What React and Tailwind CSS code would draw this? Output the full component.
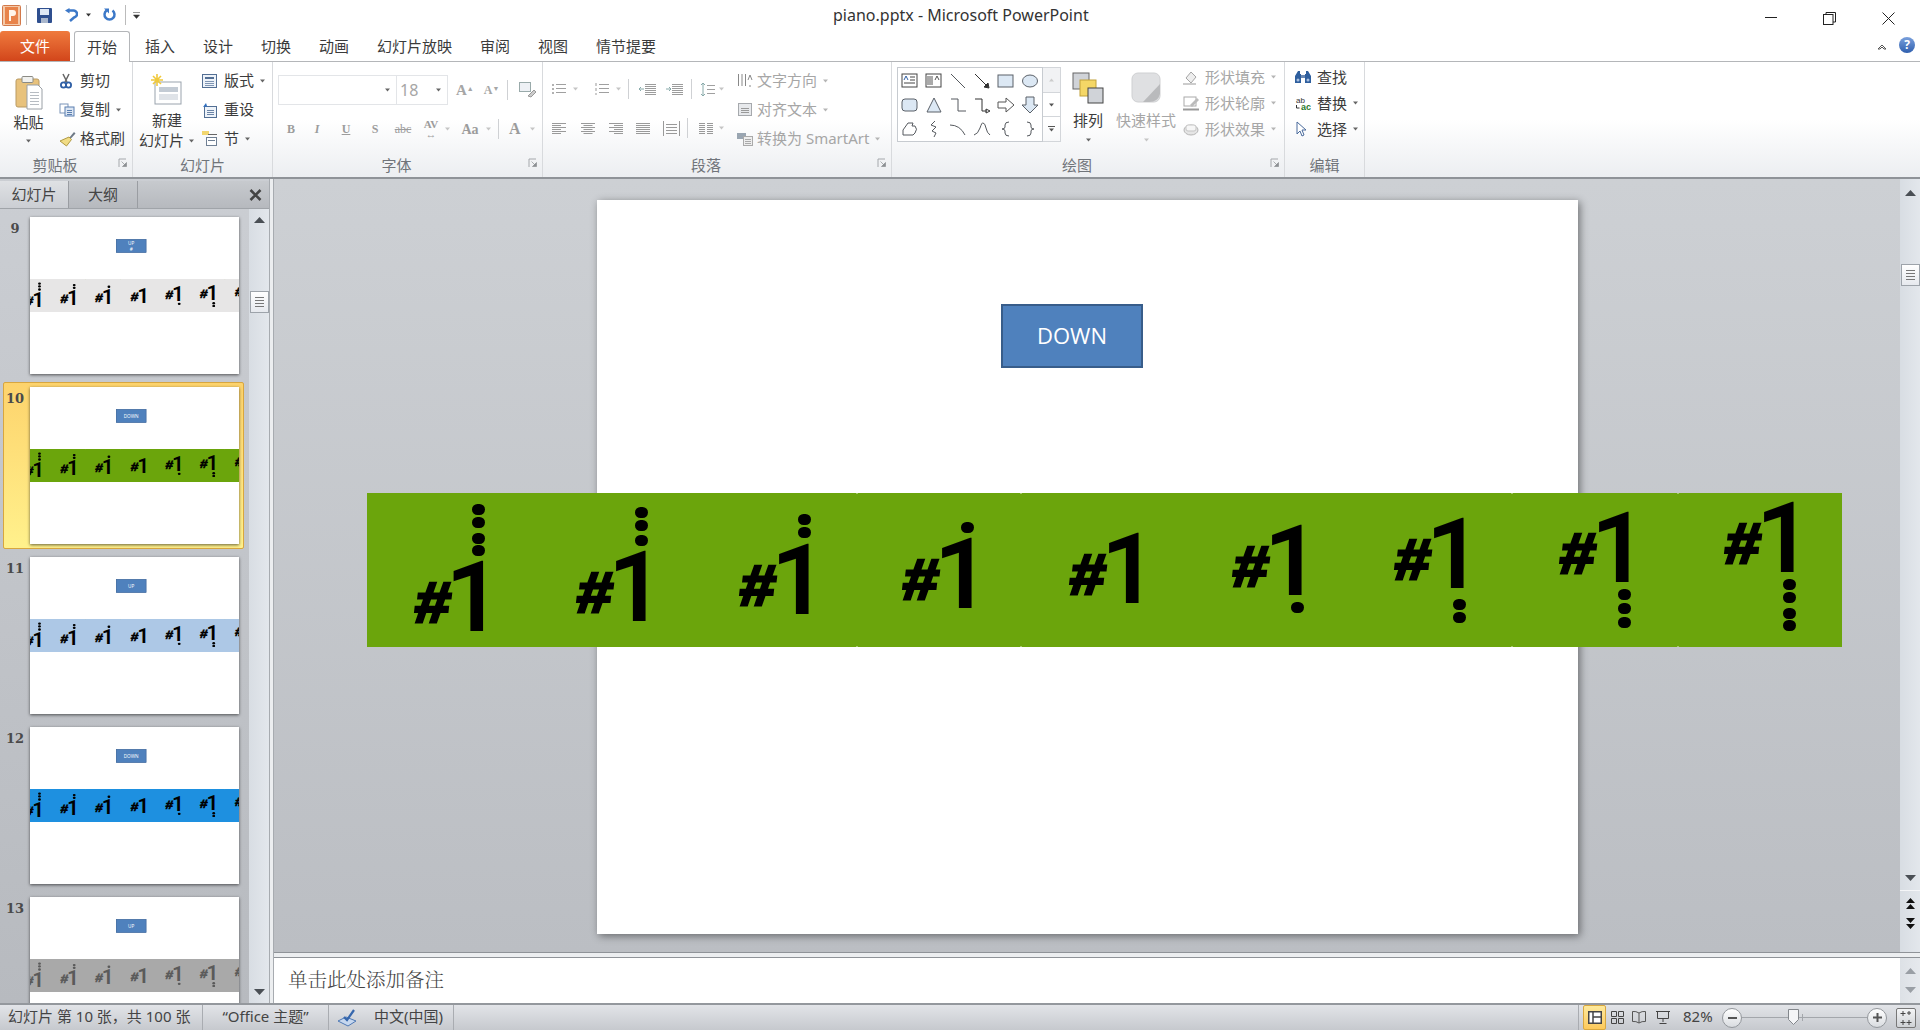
import React from "react";

const Svg = ({ w, h, children, className = "" }) => (
  <svg width={w} height={h} viewBox={`0 0 ${w} ${h}`} className={"shrink-0 " + className}>{children}</svg>
);
const Arrow = ({ c = "#666", className = "" }) => (
  <Svg w={7} h={4} className={className}><path d="M1 0.5h5L3.5 3.5z" fill={c} /></Svg>
);
const Launcher = () => (
  <Svg w={10} h={10}><path d="M1 9V1h7" fill="none" stroke="#a5a8ac" /><path d="M3.5 3.5l4 4M8.5 4.5v4h-4z" fill="#8d9094" stroke="#8d9094" strokeWidth=".7" /></Svg>
);

const NOTES = [
  { r: 485.5, y: 562, d: [509.3, 522.7, 538.3, 550.3] },
  { r: 648, y: 552, d: [512, 525, 540] },
  { r: 811, y: 545, d: [519, 532] },
  { r: 974, y: 539, d: [527] },
  { r: 1141, y: 534, d: [] },
  { r: 1304, y: 526, d: [607] },
  { r: 1466, y: 519, d: [604, 617] },
  { r: 1631, y: 513, d: [594, 608, 622] },
  { r: 1796, y: 503, d: [584, 597, 613, 625] },
];

function Band({ bg, ink }) {
  return (
    <div className={"absolute left-[-230px] top-[293px] w-[1475px] h-[154px] " + bg + " " + ink}>
      {[489, 653, 1144, 1310].map((x) => (
        <React.Fragment key={x}>
          <div className="absolute top-0 w-[2px] h-px bg-[#a6c96a]" style={{ left: x }} />
          <div className="absolute bottom-0 w-[2px] h-px bg-[#a6c96a]" style={{ left: x }} />
        </React.Fragment>
      ))}
      {NOTES.map((n, i) => (
        <React.Fragment key={i}>
          <div
            className="absolute w-[120px] h-[96px] text-right whitespace-nowrap leading-[96px] font-bold"
            style={{ left: n.r - 367 - 120 + 16, top: n.y - 493 - 12 }}
          >
            <span className="relative top-[-9px] mr-[-4px] inline-block origin-right scale-x-[1.1] -skew-x-6 text-[57px] italic [font-family:'Liberation_Sans',sans-serif] [-webkit-text-stroke:3px_currentColor]">#</span>
            <span className="text-[98px] font-semibold [font-family:'Roboto',sans-serif]">1</span>
          </div>
          {n.d.map((y) => (
            <div key={y} className="absolute w-[13px] h-[11px] rounded-full bg-current" style={{ left: n.r - 367 - 13.5, top: y - 493 - 5.5 }} />
          ))}
        </React.Fragment>
      ))}
    </div>
  );
}

function SlideContent({ label, bg, ink, sub }) {
  return (
    <>
      <div className="absolute left-[404px] top-[104px] w-[142px] h-[64px] bg-[#4f81bd] border-2 border-[#385d8a] text-white flex flex-col items-center justify-center text-[22px] leading-[28px] pb-[2px] [font-family:'Open_Sans',sans-serif]">
        <span>{label}</span>
        {sub && <span>{sub}</span>}
      </div>
      <Band bg={bg} ink={ink} />
    </>
  );
}

function Thumb({ n, label, sub, bg, ink = "text-black", selected }) {
  return (
    <div className="relative h-[170px] shrink-0 flex">
      {selected && (
        <div className="absolute left-[3px] top-[-5px] w-[241px] h-[167px] rounded-[2px] border border-[#d8a63f] bg-gradient-to-b from-[#fdd36c] to-[#fff18c]" />
      )}
      <div className="relative w-[30px] text-center pt-[4px] text-[13px] leading-[16px] font-bold text-[#4a4a4a] [font-family:'DejaVu_Serif',serif]">{n}</div>
      <div className="relative w-[209px] h-[157px] bg-white overflow-hidden shadow-[0_1px_3px_rgba(0,0,0,0.6)]">
        <div className="absolute left-0 top-0 w-[981px] h-[734px] origin-top-left scale-[0.213]">
          <SlideContent label={label} sub={sub} bg={bg} ink={ink} />
        </div>
      </div>
    </div>
  );
}

const TextRow = ({ icon, label, arrow, h = "h-[29px]", iw = "w-[21px]", off }) => (
  <div className={"flex items-center whitespace-nowrap " + h}>
    <div className={"flex items-center " + iw}>{icon}</div>
    <span className={off ? "text-[#a6a6a6]" : "text-[#3c3c3c]"}>{label}</span>
    {arrow && <Arrow c={off ? "#b5b5b5" : "#666"} className="ml-[5px]" />}
  </div>
);

const Group = ({ w, label, launcher, children }) => (
  <div className={"relative h-full flex flex-col shrink-0 border-r border-[#d8dadd] " + w}>
    <div className="flex-1 flex min-h-0">{children}</div>
    <div className={"relative h-[25px] shrink-0 flex items-center justify-center pt-[2px] text-[15px] text-[#70747a] " + (launcher ? "pr-[22px]" : "")}>
      {label}
      {launcher && <div className="absolute right-[4px] top-[6px]"><Launcher /></div>}
    </div>
  </div>
);

const lines = (x, ys, len, c = "#8c8c8c") => ys.map((y) => <path key={y} d={`M${x} ${y}.5h${len}`} stroke={c} fill="none" />);

const Clip = () => (
  <Svg w={28} h={35}>
    <rect x="1" y="4" width="23" height="28" rx="2" fill="#e8c27c" stroke="#b99a63" />
    <rect x="7" y="1.5" width="11" height="6" rx="1" fill="#f1f1ee" stroke="#8b8b85" />
    <path d="M12 10h11l4 4v20H12z" fill="#fff" stroke="#9aa0a6" />
    {lines(15, [17, 20, 23, 26, 29], 9, "#b7bcc2")}
  </Svg>
);
const Scissors = () => (
  <Svg w={14} h={16}><path d="M4 1l4 8M10 1L6 9" stroke="#666" strokeWidth="1.5" /><circle cx="4.5" cy="12" r="2.6" fill="none" stroke="#2f5fa5" strokeWidth="1.8" /><circle cx="9.5" cy="12" r="2.6" fill="none" stroke="#2f5fa5" strokeWidth="1.8" /></Svg>
);
const CopyI = () => (
  <Svg w={16} h={14}><rect x="1" y="1" width="8" height="9" fill="#fff" stroke="#7a93b8" /><rect x="6" y="4" width="9" height="9" fill="#dce6f3" stroke="#5b7fb0" />{lines(8, [7, 9, 11], 5, "#5b7fb0")}</Svg>
);
const Brush = () => (
  <Svg w={17} h={16}><path d="M10 7l5-6 1.500 1.500L11 8.500z" fill="#6d7885" /><path d="M10 6l2.500 2.500-5 6.500L1 10z" fill="#f1dc84" stroke="#b09a45" /></Svg>
);
const NewSlide = () => (
  <Svg w={32} h={32}>
    <rect x="4" y="8" width="26" height="22" fill="#fff" stroke="#9aa3ad" />
    <rect x="8" y="13" width="19" height="5" fill="#c3cbd4" /><rect x="8" y="20" width="19" height="6" fill="#dfe3e8" />
    <path d="M6 0v12M0 6h12M2 2l8 8M10 2l-8 8" stroke="#f0c93c" strokeWidth="1.600" />
  </Svg>
);
const Layout = () => (
  <Svg w={15} h={14}><rect x=".5" y=".5" width="14" height="13" fill="#eef3f9" stroke="#536f94" /><rect x="3" y="3" width="9" height="2" fill="#536f94" />{lines(3, [7, 9, 11], 9, "#7f95b3")}</Svg>
);
const Reset = () => (
  <Svg w={15} h={16}><rect x="2.500" y="4.500" width="12" height="11" fill="#eef3f9" stroke="#536f94" />{lines(5, [8, 10, 12], 7, "#6b84a6")}<path d="M1 5l3-4 1 3h3z" fill="#2f6fc0" /></Svg>
);
const Section = () => (
  <Svg w={16} h={15}><rect x="0" y="0" width="7" height="4" fill="#f2d66f" />{lines(6, [3], 9, "#666")}<rect x="4.500" y="6.500" width="10" height="8" fill="#fff" stroke="#6f7f93" />{lines(6, [9], 7, "#6f7f93")}</Svg>
);
const Shape = ({ k }) => {
  const s = { fill: "none", stroke: "#55595e" };
  const f = { fill: "#dce8f4", stroke: "#5a6068" };
  const m = {
    a: <><rect x="4" y="5" width="15" height="13" fill="#fff" stroke="#444" /><path d="M6 11l2-4 2 4" fill="none" stroke="#2f5fa5" /><path d="M12 8h5M12 11h5M6 14h11" stroke="#444" /></>,
    b: <><rect x="4" y="5" width="15" height="13" fill="#fff" stroke="#444" /><path d="M6 7v9M8 7v9M10 7v9M13 11l2-4 2 4" stroke="#555" fill="none" /></>,
    c: <path d="M5 5l14 14" {...s} />,
    d: <path d="M5 5l13 13M19 19l-5-1 4-4z" stroke="#333" fill="#333" />,
    e: <rect x="4" y="6" width="15" height="12" {...f} />,
    f: <ellipse cx="12" cy="12" rx="7.500" ry="6" {...f} />,
    g: <rect x="4" y="6" width="15" height="12" rx="3" {...f} />,
    h: <path d="M12 5l7 14H5z" {...f} />,
    i: <path d="M5 6h7v12h8" {...s} />,
    j: <path d="M5 6h7v12h5M20 18l-4-2v4z" stroke="#333" fill="none" />,
    k: <path d="M4 9h8V5l8 7-8 7v-4H4z" fill="#fff" stroke="#555" />,
    l: <path d="M8 4h8v8h4l-8 8-8-8h4z" {...f} />,
    m: <path d="M5 18v-5l5-7h5l-1 3h3q3 3 0 7l-2 2z" {...s} />,
    n: <path d="M13 4l-4 4 5 2-4 4 4 2-2 4" {...s} />,
    o: <path d="M4 8q10 0 15 10" {...s} />,
    p: <path d="M4 18q4-1 6-7t3-5q2 0 3 5t4 7" {...s} />,
    q: <path d="M15 5q-4 0-4 3v2q0 2-3 2 3 0 3 2v2q0 3 4 3" {...s} />,
    r: <path d="M9 5q4 0 4 3v2q0 2 3 2-3 0-3 2v2q0 3-4 3" {...s} />,
  };
  return <Svg w={24} h={24}>{m[k]}</Svg>;
};
const Bars = ({ a = "l" }) => (
  <Svg w={16} h={14}>
    {[2, 4, 6, 8, 10, 12].map((y, i) => {
      const long = i % 2 === 0;
      const len = long ? 14 : 9;
      const x = a === "l" ? 1 : a === "c" ? (16 - len) / 2 : a === "r" ? 15 - len : 1;
      return <path key={y} d={`M${x} ${y}.5h${a === "j" ? 14 : len}`} stroke="#9a9a9a" />;
    })}
  </Svg>
);
const Sep = ({ h = "h-[20px]" }) => <div className={"w-px bg-[#cfd1d4] shrink-0 " + h} />;

export default function App() {
  return (
    <div className="w-[1920px] h-[1030px] overflow-hidden flex flex-col bg-white text-[15px] [font-family:'Noto_Sans','Noto_Sans_CJK_SC',sans-serif]">
      {/* title bar */}
      <div className="relative h-[30px] shrink-0 flex items-center bg-white pl-[2px]">
        <Svg w={20} h={21}>
          <rect x=".5" y=".5" width="18" height="20" rx="1" fill="#f4c9a8" stroke="#d2794a" />
          <rect x="3" y="2" width="13" height="17" fill="#e8834a" />
          <path d="M7 16V5h4q3 0 3 3t-3 3H9v5z" fill="#fff5ea" />
        </Svg>
        <div className="w-px h-[20px] bg-[#bbb] ml-[4px]" />
        <Svg w={17} h={17} className="ml-[9px]">
          <rect x="1" y="1" width="15" height="15" rx="1" fill="#2f4f8f" /><rect x="4" y="2" width="9" height="6" fill="#dfe8f5" /><rect x="5" y="11" width="7" height="5" fill="#a9b6cc" />
        </Svg>
        <Svg w={14} h={14} className="ml-[11px]"><path d="M5 2.500h4a3.500 3.500 0 0 1 1 7L6 13" fill="none" stroke="#3c78c8" strokeWidth="2.500" /><path d="M1 2.500L5.500 0v5.500z" fill="#3c78c8" /></Svg>
        <Arrow c="#333" className="ml-[7px]" />
        <Svg w={14} h={14} className="ml-[10px]"><path d="M4.500 2.500a5 5 0 1 0 6 0" fill="none" stroke="#3c78c8" strokeWidth="2.500" /><path d="M2 .5h5v5z" fill="#3c78c8" /></Svg>
        <div className="w-px h-[20px] bg-[#bbb] ml-[9px]" />
        <Svg w={7} h={7} className="ml-[7px]"><path d="M0 .5h7M0.500 3h6L3.500 6.500z" fill="#333" stroke="#333" strokeWidth=".5" /></Svg>
        <div className="absolute left-[833px] top-[3px] text-[16px] leading-[24px] text-[#333] whitespace-nowrap">piano.pptx - Microsoft PowerPoint</div>
        <Svg w={12} h={2} className="absolute left-[1765px] top-[17px]"><path d="M0 .5h12" stroke="#222" /></Svg>
        <Svg w={13} h={13} className="absolute left-[1823px] top-[12px]"><path d="M3 2.500V.5h9.500V10H10" fill="none" stroke="#222" /><rect x=".5" y="2.500" width="9.500" height="10" fill="#fff" stroke="#222" /></Svg>
        <Svg w={13} h={13} className="absolute left-[1882px] top-[12px]"><path d="M.5.5l12 12M12.500.5l-12 12" stroke="#222" /></Svg>
      </div>

      {/* tabs */}
      <div className="relative h-[32px] shrink-0 flex items-end border-b border-[#b4b6b9]">
        <div className="w-[70px] h-[30px] mt-[2px] rounded-t-[3px] bg-gradient-to-b from-[#ef7a3d] to-[#d2451a] text-white flex items-center justify-center">文件</div>
        <div className="relative ml-[4px] w-[56px] h-[31px] mb-[-1px] rounded-t-[3px] border border-b-0 border-[#b4b6b9] bg-white flex items-center justify-center text-[#3b3b3b]">开始</div>
        <div className="ml-[15px] h-[30px] flex items-center gap-[28px] text-[#3b3b3b] whitespace-nowrap">
          <span>插入</span><span>设计</span><span>切换</span><span>动画</span><span>幻灯片放映</span><span>审阅</span><span>视图</span><span>情节提要</span>
        </div>
        <Svg w={10} h={7} className="absolute left-[1877px] top-[13px]"><path d="M1 6l4-4 4 4-2 0-2-2-2 2z" fill="#fff" stroke="#555" /></Svg>
        <div className="absolute left-[1899px] top-[7px] w-[16px] h-[16px] rounded-full bg-gradient-to-b from-[#7aa0dc] to-[#2f5fae] text-white text-[12px] leading-[16px] text-center font-bold">?</div>
      </div>

      {/* ribbon */}
      <div className="h-[117px] shrink-0 flex bg-gradient-to-b from-white via-white via-50% to-[#eceef1] border-b-2 border-[#8f9398]">
        <Group w="w-[133px]" label="剪贴板" launcher>
          <div className="w-[57px] flex flex-col items-center pt-[13px] text-[#3c3c3c]">
            <Clip />
            <span className="leading-[24px]">粘贴</span>
            <Arrow className="mt-[5px]" />
          </div>
          <div className="ml-[2px] pt-[4px]">
            <TextRow icon={<Scissors />} label="剪切" />
            <TextRow icon={<CopyI />} label="复制" arrow />
            <TextRow icon={<Brush />} label="格式刷" />
          </div>
        </Group>
        <Group w="w-[140px]" label="幻灯片">
          <div className="w-[68px] flex flex-col items-center pt-[12px] text-[#3c3c3c] whitespace-nowrap">
            <NewSlide />
            <span className="mt-[3px] leading-[22px]">新建</span>
            <span className="leading-[19px] flex items-center">幻灯片<Arrow className="ml-[4px]" /></span>
          </div>
          <div className="ml-[1px] pt-[4px]">
            <TextRow icon={<Layout />} label="版式" arrow iw="w-[22px]" />
            <TextRow icon={<Reset />} label="重设" iw="w-[22px]" />
            <TextRow icon={<Section />} label="节" arrow iw="w-[22px]" />
          </div>
        </Group>
        <Group w="w-[270px]" label="字体" launcher>
          <div className="flex flex-col w-full pt-[13px] text-[#a6a6a6]">
            <div className="flex items-center h-[30px] pl-[5px]">
              <div className="w-[119px] h-[30px] border border-[#e3e5e8] flex items-center justify-end pr-[5px]"><Arrow /></div>
              <div className="w-[51px] h-[30px] border border-l-0 border-[#e3e5e8] flex items-center justify-between px-[3px] pr-[5px] text-[16px]">18<Arrow /></div>
              <span className="ml-[8px] text-[15px] font-bold [font-family:'Liberation_Serif',serif]">A<sup className="text-[7px]">▲</sup></span>
              <span className="ml-[10px] text-[12px] font-bold [font-family:'Liberation_Serif',serif]">A<sup className="text-[7px]">▼</sup></span>
              <div className="ml-[8px]"><Sep /></div>
              <Svg w={17} h={16} className="ml-[11px]"><rect x=".5" y=".5" width="11" height="9" fill="#eef1f5" stroke="#9aa" /><path d="M9 14l6-6 2 2-5 5z" fill="#ccc" stroke="#999" /></Svg>
            </div>
            <div className="flex items-center h-[24px] mt-[12px] pl-[4px] text-[12px] font-bold [font-family:'Liberation_Serif',serif] text-[#9c9c9c]">
              <span className="w-[28px] text-center">B</span>
              <span className="w-[24px] text-center italic">I</span>
              <span className="w-[34px] text-center underline">U</span>
              <span className="w-[24px] text-center">S</span>
              <span className="w-[32px] text-center line-through font-normal">abc</span>
              <span className="w-[24px] text-center text-[11px] leading-[10px]">AV<br />↔</span>
              <Arrow c="#c5c5c5" className="ml-[1px]" />
              <span className="w-[30px] ml-[4px] text-center text-[14px]">Aa</span>
              <Arrow c="#c5c5c5" />
              <div className="ml-[6px]"><Sep /></div>
              <span className="ml-[10px] text-[16px]">A</span>
              <Arrow c="#c5c5c5" className="ml-[8px]" />
            </div>
          </div>
        </Group>
        <Group w="w-[349px]" label="段落" launcher>
          <div className="w-[194px] shrink-0 pt-[20px]">
            <div className="flex items-center h-[14px]">
              <div className="ml-[8px]"><Svg w={16} h={14}><circle cx="2" cy="3" r="1" fill="#999" /><circle cx="2" cy="7" r="1" fill="#999" /><circle cx="2" cy="11" r="1" fill="#999" />{lines(5, [2, 6, 10], 10, "#a0a0a0")}</Svg></div>
              <Arrow c="#c5c5c5" className="ml-[5px]" />
              <div className="ml-[15px]"><Svg w={16} h={14}><path d="M2 1v3M2 6v3M2 11v2" stroke="#999" />{lines(5, [2, 6, 10], 10, "#a0a0a0")}</Svg></div>
              <Arrow c="#c5c5c5" className="ml-[5px]" />
              <div className="ml-[6px]"><Sep /></div>
              <div className="ml-[10px]"><Svg w={18} h={14}>{lines(6, [2, 4, 6, 8, 10, 12], 11, "#9c9c9c")}<path d="M5 7H0M2 5L0 7l2 2" stroke="#8aa" fill="none" /></Svg></div>
              <div className="ml-[9px]"><Svg w={18} h={14}>{lines(6, [2, 4, 6, 8, 10, 12], 11, "#9c9c9c")}<path d="M0 7h5M3 5l2 2-2 2" stroke="#8aa" fill="none" /></Svg></div>
              <div className="ml-[7px]"><Sep /></div>
              <div className="ml-[8px]"><Svg w={16} h={15}><path d="M3 1v13M1 3l2-2 2 2M1 12l2 2 2-2" stroke="#8aa" fill="none" />{lines(7, [3, 7, 11], 8, "#a0a0a0")}</Svg></div>
              <Arrow c="#c5c5c5" className="ml-[2px]" />
            </div>
            <div className="flex items-center h-[14px] mt-[25px]">
              <div className="ml-[8px]"><Bars a="l" /></div>
              <div className="ml-[13px]"><Bars a="c" /></div>
              <div className="ml-[12px]"><Bars a="r" /></div>
              <div className="ml-[11px]"><Bars a="j" /></div>
              <div className="ml-[12px]"><Svg w={17} h={17}><path d="M.5 1v15M16.500 1v15" stroke="#999" />{lines(3, [4, 7, 10, 13], 11, "#999")}</Svg></div>
              <div className="ml-[7px]"><Sep /></div>
              <div className="ml-[11px]"><Svg w={14} h={14}>{lines(0, [2, 4, 6, 8, 10, 12], 6, "#999")}{lines(8, [2, 4, 6, 8, 10, 12], 6, "#999")}</Svg></div>
              <Arrow c="#c5c5c5" className="ml-[5px]" />
            </div>
          </div>
          <div className="pt-[4px]">
            <TextRow off arrow iw="w-[20px]" label="文字方向" icon={<Svg w={16} h={15}><path d="M1.500 1v12M5 1v12M8.500 1v12" stroke="#888" /><path d="M11 7l2-5 2 5M12 13h2" stroke="#888" fill="none" /></Svg>} />
            <TextRow off arrow iw="w-[20px]" label="对齐文本" icon={<Svg w={16} h={17}><rect x="1.500" y="2.500" width="13" height="12" fill="#e7e9ec" stroke="#a6a9ad" />{lines(4, [7, 9, 11], 8, "#999")}</Svg>} />
            <TextRow off arrow iw="w-[20px]" label="转换为 SmartArt" icon={<Svg w={17} h={17}><path d="M0 3h9v6H0z" fill="#9aa6b2" /><rect x="6.500" y="6.500" width="9" height="9" fill="#eee" stroke="#aaa" />{lines(8, [9, 11, 13], 6, "#aaa")}</Svg>} />
          </div>
        </Group>
        <Group w="w-[393px]" label="绘图" launcher>
          <div className="ml-[5px] mt-[5px] w-[146px] h-[75px] pt-[1px] border border-[#c7cbd0] bg-white grid grid-cols-[repeat(6,24px)] grid-rows-[repeat(3,24px)] shrink-0">
            {"abcdefghijklmnopqr".split("").map((k) => <Shape key={k} k={k} />)}
          </div>
          <div className="mt-[5px] w-[18px] h-[75px] flex flex-col shrink-0 border border-l-0 border-[#d3d6da]">
            <div className="h-[25px] flex items-center justify-center bg-[#f1f2f4] border-b border-[#d3d6da]"><Svg w={7} h={4}><path d="M1 3.500h5L3.500.5z" fill="#ccc" /></Svg></div>
            <div className="h-[24px] flex items-center justify-center border-b border-[#d3d6da]"><Arrow c="#555" /></div>
            <div className="flex-1 flex flex-col items-center justify-center gap-[1px]"><div className="w-[7px] h-px bg-[#555]" /><Arrow c="#555" /></div>
          </div>
          <div className="ml-[3px] w-[48px] flex flex-col items-center pt-[10px] text-[#3c3c3c] shrink-0">
            <Svg w={32} h={32}><rect x="1" y="1" width="16" height="16" fill="#d0d3d8" stroke="#666" /><rect x="8" y="8" width="16" height="16" fill="#f5d766" stroke="#c2a23b" /><rect x="16" y="16" width="15" height="15" fill="#d0d3d8" stroke="#444" /></Svg>
            <span className="mt-[4px] leading-[24px]">排列</span>
            <Arrow className="mt-[6px]" />
          </div>
          <div className="w-[68px] flex flex-col items-center pt-[10px] text-[#a6a6a6] shrink-0">
            <Svg w={30} h={32}><rect x="1" y="1" width="28" height="29" rx="6" fill="#dfe0e2" stroke="#cfd0d2" /><path d="M29 12L12 30h6q9 0 11-8z" fill="#b9babc" /></Svg>
            <span className="mt-[4px] leading-[24px] whitespace-nowrap">快速样式</span>
            <Arrow c="#c5c5c5" className="mt-[6px]" />
          </div>
          <div className="ml-[3px] pt-[2px] shrink-0">
            <TextRow off arrow h="h-[26px]" iw="w-[22px]" label="形状填充" icon={<Svg w={16} h={15}><path d="M3 8l5-6 5 5-5 6z" fill="#eee" stroke="#a5a5a5" /><path d="M0 14h13" stroke="#ccc" strokeWidth="2" /></Svg>} />
            <TextRow off arrow h="h-[26px]" iw="w-[22px]" label="形状轮廓" icon={<Svg w={16} h={15}><rect x="1" y="1" width="12" height="9" fill="#fff" stroke="#aaa" /><path d="M7 9l7-7 2 2-7 7z" fill="#bbb" /><path d="M0 13.500h16" stroke="#999" strokeWidth="2" /></Svg>} />
            <TextRow off arrow h="h-[26px]" iw="w-[22px]" label="形状效果" icon={<Svg w={16} h={14}><ellipse cx="8" cy="8" rx="7" ry="5" fill="#e5e5e5" stroke="#b5b5b5" /><rect x="3" y="3" width="10" height="6" rx="2" fill="#f6f6f6" stroke="#c5c5c5" /></Svg>} />
          </div>
        </Group>
        <Group w="w-[80px]" label="编辑">
          <div className="ml-[10px] pt-[2px]">
            <TextRow h="h-[26px]" iw="w-[22px]" label="查找" icon={<Svg w={16} h={15}><path d="M3 1h2v3h1v9H0V6zM11 1h2l3 5v7h-6V4h1z" fill="#2f5f9e" /><rect x="6" y="5" width="4" height="3" fill="#6c89b2" /><circle cx="3" cy="10" r="1.500" fill="#a9c0e0" /><circle cx="13" cy="10" r="1.500" fill="#a9c0e0" /></Svg>} />
            <TextRow h="h-[26px]" iw="w-[22px]" label="替换" arrow icon={<Svg w={16} h={15}><path d="M1.500 9v3h3" fill="none" stroke="#333" /><text x="6" y="14" fontSize="9" fontWeight="700" fill="#2a7a2a" fontFamily="Liberation Sans">ac</text><text x="1" y="7" fontSize="8" fill="#333" fontFamily="Liberation Sans">ab</text></Svg>} />
            <TextRow h="h-[26px]" iw="w-[22px]" label="选择" arrow icon={<Svg w={13} h={16}><path d="M2 1v12l3-3 2 5 2-1-2-5h4z" fill="#fff" stroke="#4a6b9c" /></Svg>} />
          </div>
        </Group>
      </div>

      {/* workspace */}
      <div className="flex-1 min-h-0 flex bg-[#cfd2d6]">
        {/* left pane */}
        <div className="w-[270px] shrink-0 flex flex-col bg-gradient-to-b from-[#cbced3] to-[#b7babf] border-r border-[#a7abb0]">
          <div className="h-[28px] shrink-0 mt-[2px] flex items-stretch border-b border-[#a0a4a9] bg-gradient-to-b from-[#c7cace] to-[#b6b9be] text-[15px]">
            <div className="w-[69px] flex items-center justify-center bg-gradient-to-b from-[#dfe1e4] to-[#cbced3] border-r border-[#9a9da2] text-[#444]">幻灯片</div>
            <div className="w-[69px] flex items-center justify-center border-r border-[#9a9da2] text-[#444]">大纲</div>
            <div className="flex-1 flex items-center justify-end pr-[7px]">
              <Svg w={13} h={12}><path d="M1.500 1l10 10M11.500 1l-10 10" stroke="#444" strokeWidth="2.600" /></Svg>
            </div>
          </div>
          <div className="flex-1 min-h-0 flex">
            <div className="w-[249px] overflow-hidden pt-[8px]">
              <Thumb n="9" label="UP" sub="#" bg="bg-[#e7e6e6]" />
              <Thumb n="10" label="DOWN" bg="bg-[#6ba50c]" selected />
              <Thumb n="11" label="UP" bg="bg-[#adc8e6]" />
              <Thumb n="12" label="DOWN" bg="bg-[#1e90e0]" />
              <Thumb n="13" label="UP" bg="bg-[#a9a9a9]" ink="text-[#5a5a5a]" />
            </div>
            <div className="w-[20px] flex flex-col items-center bg-gradient-to-r from-[#d8dde3] to-[#e3e7ec] pt-[8px] pb-[8px]">
              <Svg w={11} h={6}><path d="M0 6h11L5.500 0z" fill="#4a4f55" /></Svg>
              <div className="mt-[68px] w-[19px] h-[22px] bg-gradient-to-b from-white to-[#e6e9ee] border border-[#9da3aa] flex flex-col items-center justify-center gap-[2px]">
                <div className="w-[9px] h-px bg-[#777]" /><div className="w-[9px] h-px bg-[#777]" /><div className="w-[9px] h-px bg-[#777]" /><div className="w-[9px] h-px bg-[#777]" />
              </div>
              <div className="flex-1" />
              <Svg w={11} h={6}><path d="M0 0h11L5.500 6z" fill="#4a4f55" /></Svg>
            </div>
          </div>
        </div>
        <div className="w-[4px] shrink-0 bg-[#eceef0] border-r border-[#a7abb0]" />
        {/* editor */}
        <div className="flex-1 min-w-0 flex flex-col">
          <div className="h-[774px] shrink-0 flex border-b border-[#8f9398]">
            <div className="flex-1 min-w-0 pl-[323px] pt-[21px] bg-gradient-to-b from-[#cdd0d4] to-[#bbbec3]">
              <div className="relative w-[981px] h-[734px] bg-white shadow-[2px_2px_8px_rgba(0,0,0,0.45)]">
                <SlideContent label="DOWN" bg="bg-[#6ba50c]" ink="text-black" />
              </div>
            </div>
            <div className="w-[20px] shrink-0 flex flex-col items-center bg-gradient-to-r from-[#d8dde3] to-[#e3e7ec] pt-[11px]">
              <Svg w={11} h={6}><path d="M0 6h11L5.500 0z" fill="#4a4f55" /></Svg>
              <div className="mt-[68px] w-[19px] h-[22px] bg-gradient-to-b from-white to-[#e6e9ee] border border-[#9da3aa] flex flex-col items-center justify-center gap-[2px]">
                <div className="w-[9px] h-px bg-[#777]" /><div className="w-[9px] h-px bg-[#777]" /><div className="w-[9px] h-px bg-[#777]" /><div className="w-[9px] h-px bg-[#777]" />
              </div>
              <div className="flex-1" />
              <Svg w={11} h={6}><path d="M0 0h11L5.500 6z" fill="#4a4f55" /></Svg>
              <div className="w-full h-px bg-[#f5f6f8] mt-[9px]" />
              <Svg w={9} h={13} className="mt-[7px]"><path d="M0 5h9L4.500 0zM0 11h9L4.500 6z" fill="#111" /></Svg>
              <Svg w={9} h={13} className="mt-[5px] mb-[23px]"><path d="M0 2h9L4.500 7zM0 8h9L4.500 13z" fill="#111" /></Svg>
            </div>
          </div>
          <div className="h-[5px] shrink-0 bg-[#eceef0] border-b border-[#8f9398]" />
          <div className="flex-1 min-h-0 flex bg-white">
            <div className="flex-1 pl-[14px] pb-[2px] flex items-center text-[19.500px] text-[#444] font-light [font-family:'Noto_Serif_CJK_SC','Noto_Sans_CJK_SC',serif]">单击此处添加备注</div>
            <div className="w-[20px] shrink-0 flex flex-col items-center justify-between py-[10px] bg-gradient-to-r from-[#dde1e6] to-[#e6e9ed]">
              <Svg w={11} h={6}><path d="M0 6h11L5.500 0z" fill="#9a9fa5" /></Svg>
              <Svg w={11} h={6}><path d="M0 0h11L5.500 6z" fill="#9a9fa5" /></Svg>
            </div>
          </div>
        </div>
      </div>

      {/* status bar */}
      <div className="h-[27px] shrink-0 flex items-center relative bg-gradient-to-b from-[#e2e4e8] to-[#c6c9ce] border-t-2 border-[#94989d] text-[15px] text-[#444] whitespace-nowrap">
        <span className="ml-[8px] w-[194px] mt-[-2px]">幻灯片 第 10 张，共 100 张</span>
        <div className="w-px h-[25px] bg-[#a9acb1]" />
        <span className="w-[125px] text-center mt-[-2px]">“Office 主题”</span>
        <div className="w-px h-[25px] bg-[#a9acb1]" />
        <Svg w={21} h={20} className="ml-[8px]"><path d="M1 13l8-4 10 4-8 5z" fill="#c6d7ee" stroke="#4d78b5" /><path d="M7 9l3 3 7-10" fill="none" stroke="#3667ad" strokeWidth="2.200" /></Svg>
        <span className="ml-[16px] w-[79px] mt-[-2px]">中文(中国)</span>
        <div className="w-px h-[25px] bg-[#a9acb1]" />
        <div className="flex-1" />
        <div className="w-px h-[25px] bg-[#a9acb1]" />
        <div className="ml-[4px] w-[23px] h-[25px] rounded-[2px] border border-[#d9a83f] bg-gradient-to-b from-[#fde99c] to-[#fcc95a] flex items-center justify-center">
          <Svg w={14} h={13}><rect x=".75" y=".75" width="12.500" height="11.500" fill="#fff" stroke="#444" strokeWidth="1.500" /><path d="M5 0v13M5 6h8" stroke="#444" strokeWidth="1.500" /></Svg>
        </div>
        <Svg w={13} h={13} className="ml-[5px]"><path d="M.5.5h5v5h-5zM7.500.5h5v5h-5zM.5 7.500h5v5h-5zM7.500 7.500h5v5h-5z" fill="none" stroke="#444" /></Svg>
        <Svg w={14} h={13} className="ml-[8px]"><path d="M7 2Q4 0 .5.5v10Q4 10 7 12q3-2 6.500-1.500V.5Q10 0 7 2zM7 2v10" fill="none" stroke="#555" /></Svg>
        <Svg w={14} h={13} className="ml-[10px]"><path d="M1.500.5h11v7h-11zM0 .5h14M7 8v3M3.500 12.500h7" fill="none" stroke="#444" /></Svg>
        <span className="ml-[13px] text-[15px] w-[36px] mt-[-2px]">82%</span>
        <div className="ml-[3px] w-[20px] h-[20px] rounded-full border border-[#93979c] bg-gradient-to-b from-white to-[#d9dce0] flex items-center justify-center"><div className="w-[9px] h-[2px] bg-[#555]" /></div>
        <div className="relative w-[125px] h-px bg-[#a3a6ab]">
          <Svg w={11} h={16} className="absolute left-[46px] top-[-8px]"><path d="M.5.5h10v10l-5 5-5-5z" fill="#f4f5f7" stroke="#83878c" /></Svg>
          <div className="absolute left-[60px] top-[-3px] w-px h-[7px] bg-[#a3a6ab]" />
        </div>
        <div className="w-[20px] h-[20px] rounded-full border border-[#93979c] bg-gradient-to-b from-white to-[#d9dce0] flex items-center justify-center">
          <Svg w={11} h={11}><path d="M5.500 1v9M1 5.500h9" stroke="#555" strokeWidth="2" /></Svg>
        </div>
        <div className="ml-[9px] mr-[4px] w-[20px] h-[20px] border border-[#777] rounded-[2px] bg-gradient-to-b from-[#f4f5f6] to-[#cfd2d6] flex items-center justify-center">
          <Svg w={14} h={14}><path d="M4 0v5M1.500 2.500h5M10 0v4M8 2h4M4 9v5M1.500 11.500h5M10 9v5M7.500 11.500h5" stroke="#444" /></Svg>
        </div>
      </div>
    </div>
  );
}
